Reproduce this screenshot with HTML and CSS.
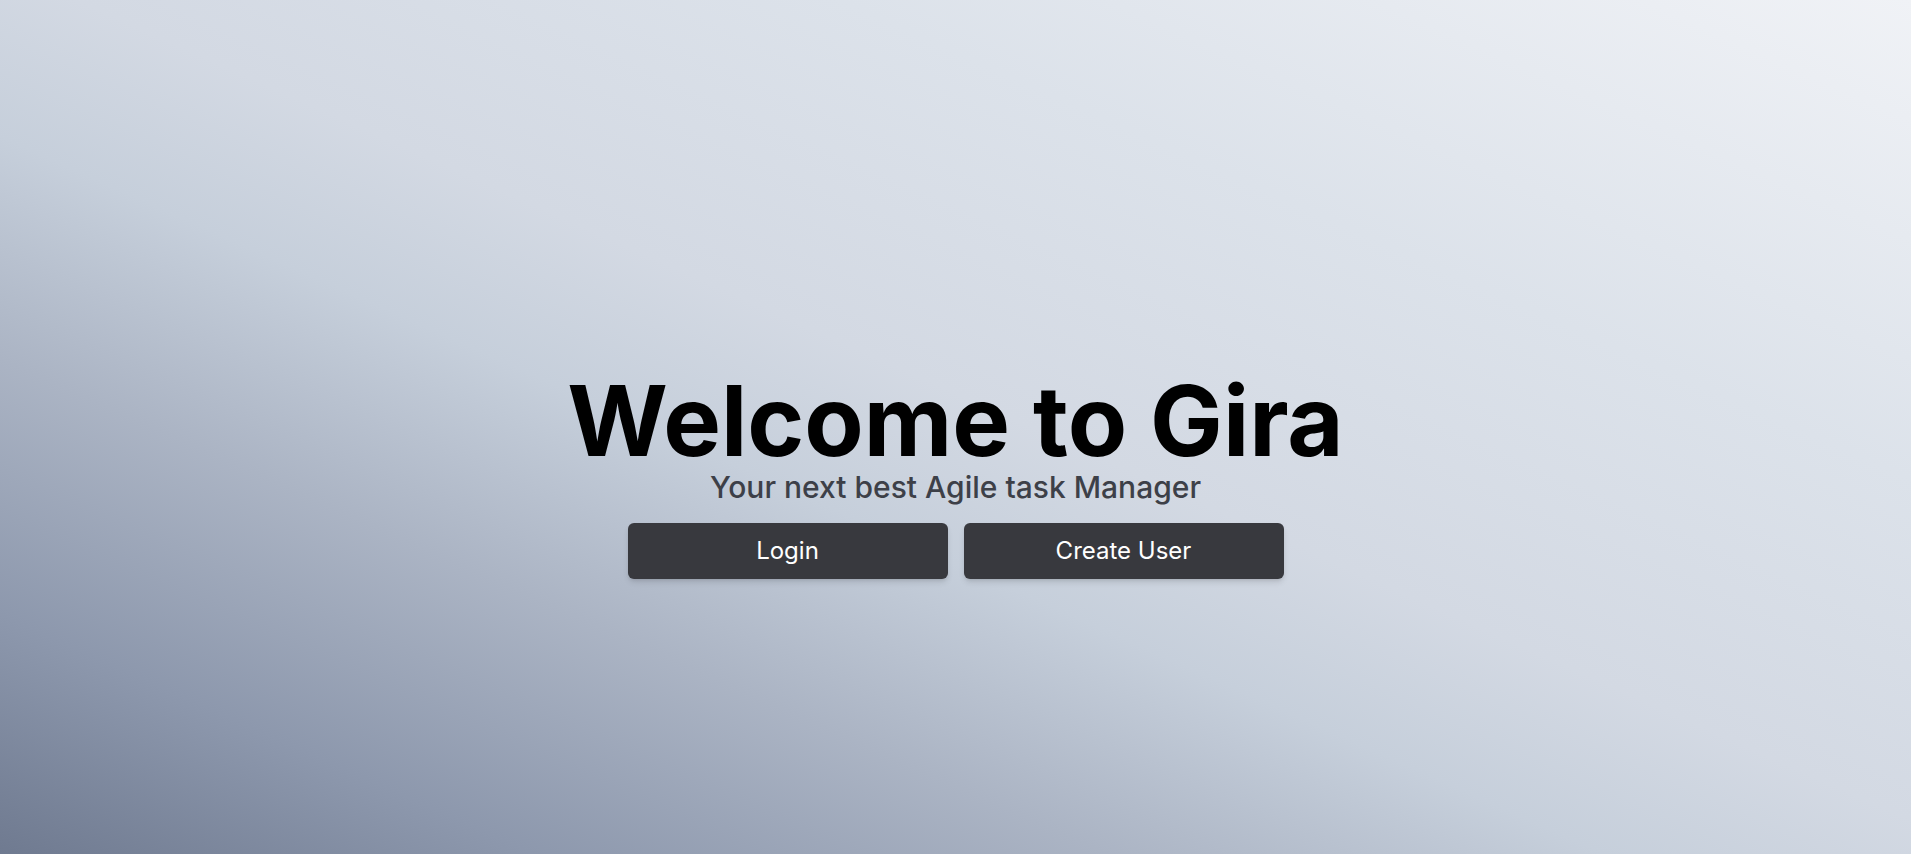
FILE: index.html
```html
<!DOCTYPE html>
<html lang="en">
<head>
<meta charset="utf-8">
<title>Gira</title>
<link rel="stylesheet" href="styles.css">
</head>
<body>
<main class="page">
  <section class="hero">
    <h1 class="title">Welcome to Gira</h1>
    <p class="subtitle">Your next best Agile task Manager</p>
    <div class="actions">
      <button class="btn" type="button">Login</button>
      <button class="btn" type="button">Create User</button>
    </div>
  </section>
</main>
</body>
</html>
```

FILE: styles.css
```css
* { box-sizing: border-box; }
html, body { margin: 0; padding: 0; height: 100%; }
body {
  font-family: Inter, "Noto Sans", "Liberation Sans", sans-serif;
  background: linear-gradient(to top right, #6f7a90 0%, #8d98ad 14%, #abb4c4 29%, #c6cfdb 42%, #d3d9e3 52%, #dce2ea 72%, #f0f2f6 100%);
  overflow: hidden;
}
.page {
  min-height: 100vh;
  display: flex;
  align-items: center;
  justify-content: center;
  padding-top: 96px;
}
.hero {
  display: flex;
  flex-direction: column;
  align-items: center;
}
.title {
  margin: 0;
  font-size: 97px;
  line-height: 1;
  font-weight: 700;
  color: #000;
}
.subtitle {
  margin: 0;
  font-size: 30px;
  line-height: 36px;
  font-weight: 500;
  color: #3d4048;
}
.actions {
  display: flex;
  gap: 16px;
  margin-top: 18px;
}
.btn {
  width: 320px;
  height: 56px;
  border: none;
  border-radius: 6px;
  background: #38393e;
  color: #fff;
  font-family: inherit;
  font-size: 24px;
  font-weight: 400;
  box-shadow: 0 4px 6px -1px rgba(0,0,0,0.12), 0 2px 4px -2px rgba(0,0,0,0.12);
  cursor: pointer;
}
```
